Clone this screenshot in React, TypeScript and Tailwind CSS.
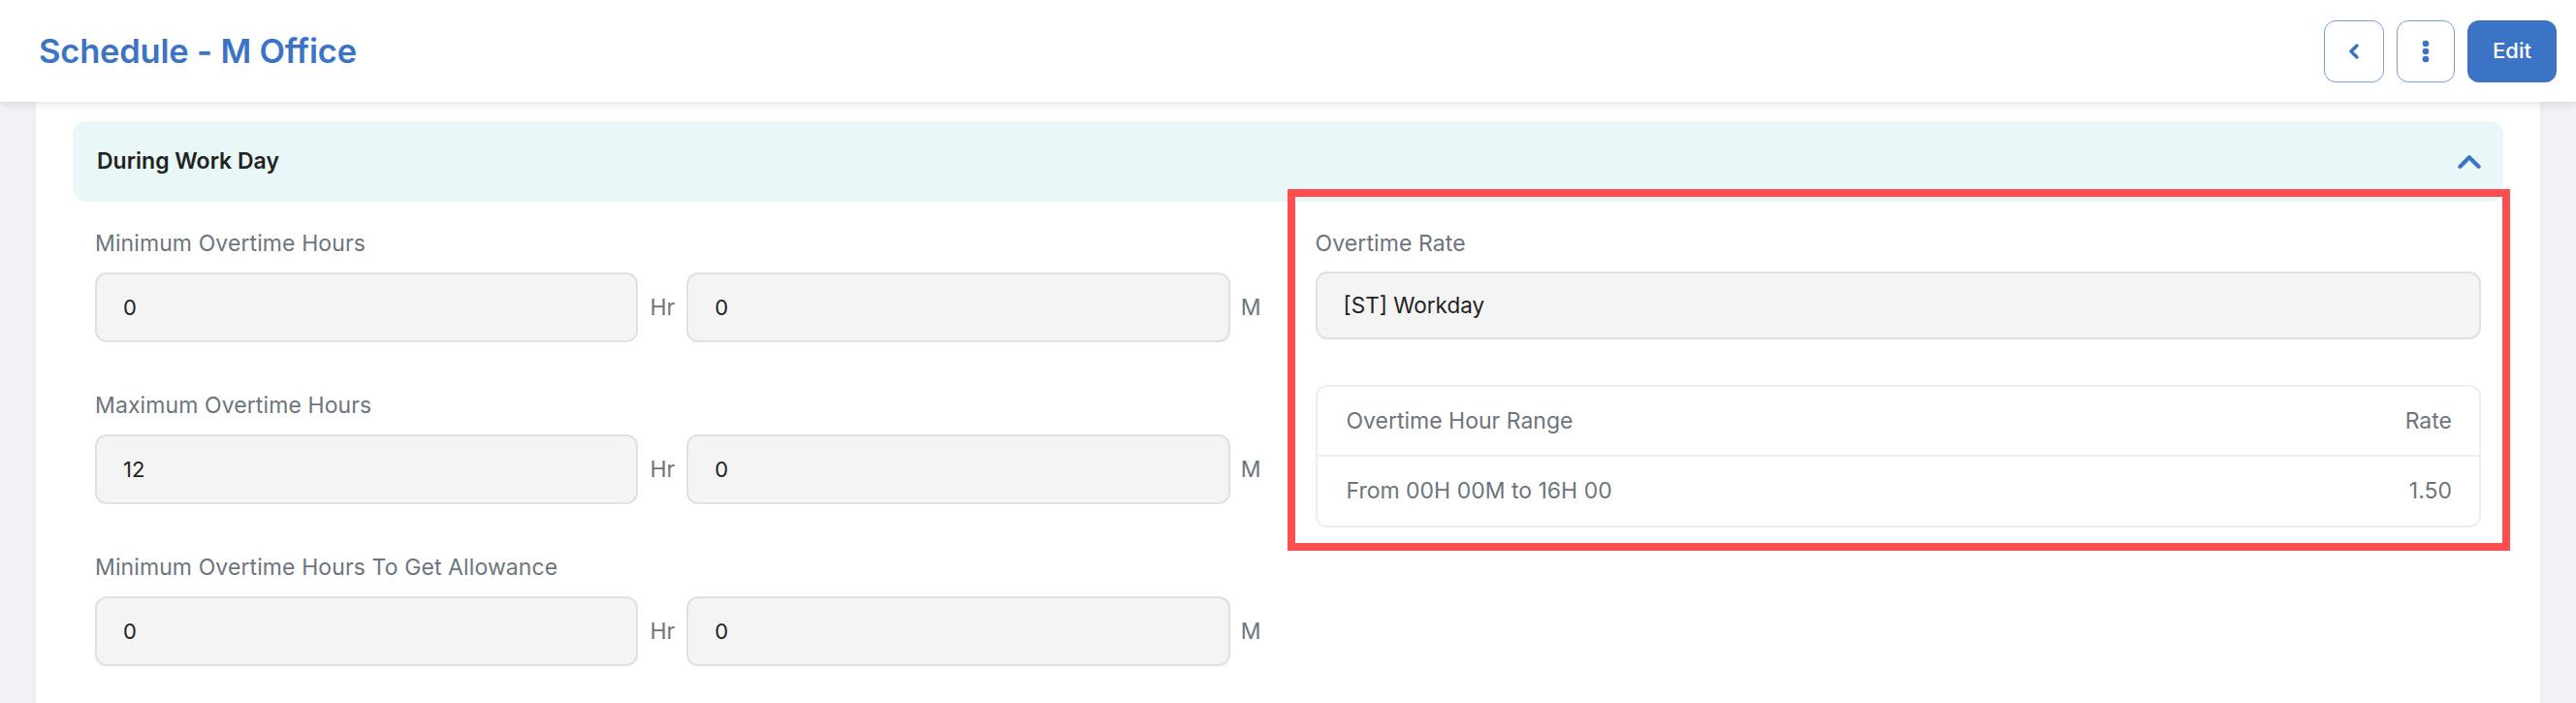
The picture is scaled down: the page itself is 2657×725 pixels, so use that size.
import { ChevronUp } from 'lucide-react';

const fontStack = "font-['Inter','Liberation_Sans',sans-serif]";

function TimeField({ label, hours, minutes }: { label: string; hours: string; minutes: string }) {
  return (
    <div className="flex flex-col">
      <label className="text-[23px] leading-[30px] tracking-[0.1px] text-[#6c757d]">{label}</label>
      <div className="mt-[15px] flex items-center">
        <input
          readOnly
          value={hours}
          className="h-[72px] flex-1 min-w-0 rounded-[12px] border-2 border-[#dce1e5] bg-[#f4f4f4] pl-[27px] text-[22px] text-[#222] outline-none"
        />
        <span className="px-[12px] text-[23px] text-[#6c757d]">Hr</span>
        <input
          readOnly
          value={minutes}
          className="h-[72px] flex-1 min-w-0 rounded-[12px] border-2 border-[#dce1e5] bg-[#f4f4f4] pl-[27px] text-[22px] text-[#222] outline-none"
        />
        <span className="pl-[11px] text-[23px] text-[#6c757d]">M</span>
      </div>
    </div>
  );
}

export default function App() {
  return (
    <div className={`relative min-h-screen bg-[#f1f2f6] ${fontStack}`}>
      {/* Top bar */}
      <header className="relative z-10 flex h-[105px] items-center justify-between bg-white pl-[40px] pr-[20px] shadow-[0_3px_8px_rgba(0,0,0,0.10)]">
        <h1 className="text-[34.5px] font-semibold tracking-[-0.2px] text-[#3b74c5]">Schedule - M Office</h1>
        <div className="flex items-center gap-[13px]">
          <button className="flex h-[64px] w-[62px] items-center justify-center rounded-[12px] border-[1.5px] border-[#76a0da] bg-white">
            <svg width="14" height="16" viewBox="0 0 14 16">
              <polyline points="10,2 4,8 10,14" fill="none" stroke="#3b74c5" strokeWidth="3.5" strokeLinecap="round" strokeLinejoin="round" />
            </svg>
          </button>
          <button className="flex h-[64px] w-[60px] items-center justify-center rounded-[12px] border-[1.5px] border-[#76a0da] bg-white">
            <svg width="8" height="24" viewBox="0 0 8 24">
              <circle cx="4" cy="4" r="3.3" fill="#3b74c5" />
              <circle cx="4" cy="12" r="3.3" fill="#3b74c5" />
              <circle cx="4" cy="20" r="3.3" fill="#3b74c5" />
            </svg>
          </button>
          <button className="flex h-[64px] w-[92px] items-center justify-center rounded-[12px] bg-[#3b74c5] text-[22px] font-medium text-white">
            Edit
          </button>
        </div>
      </header>

      {/* Page body */}
      <div className="mx-[37px] bg-white px-[38px] pt-[20px] pb-[60px] shadow-[0_0_6px_rgba(0,0,0,0.05)]">
        <section>
          <div className="flex h-[83px] items-center justify-between rounded-[14px] bg-[#e9f7f7] pl-[25px] pr-[16px]">
            <h2 className="text-[23px] font-semibold text-[#222]">During Work Day</h2>
            <ChevronUp size={38} strokeWidth={2.6} className="text-[#3b74c5]" />
          </div>

          <div className="grid grid-cols-2 gap-x-[56px] px-[23px] pt-[28px]">
            <div className="flex flex-col gap-[50px]">
              <TimeField label="Minimum Overtime Hours" hours="0" minutes="0" />
              <TimeField label="Maximum Overtime Hours" hours="12" minutes="0" />
              <TimeField label="Minimum Overtime Hours To Get Allowance" hours="0" minutes="0" />
            </div>

            <div className="flex flex-col">
              <label className="text-[23px] leading-[30px] tracking-[0.1px] text-[#6c757d]">Overtime Rate</label>
              <div className="mt-[14px] flex h-[70px] items-center rounded-[12px] border-2 border-[#dce1e5] bg-[#f4f4f4] pl-[27px] text-[22.5px] text-[#222]">
                [ST] Workday
              </div>

              <div className="mt-[47px] rounded-[12px] border-2 border-[#eceef0] text-[23px] text-[#6c757d]">
                <div className="flex h-[72px] items-center justify-between border-b-2 border-[#eceef0] pl-[30px] pr-[28px]">
                  <span>Overtime Hour Range</span>
                  <span>Rate</span>
                </div>
                <div className="flex h-[71px] items-center justify-between pl-[30px] pr-[28px]">
                  <span>From 00H 00M to 16H 00</span>
                  <span>1.50</span>
                </div>
              </div>
            </div>
          </div>
        </section>
      </div>

      {/* Highlight annotation */}
      <div className="pointer-events-none absolute left-[1328px] top-[195px] h-[373px] w-[1261px] border-[8px] border-[#fe4e50]" />
    </div>
  );
}
